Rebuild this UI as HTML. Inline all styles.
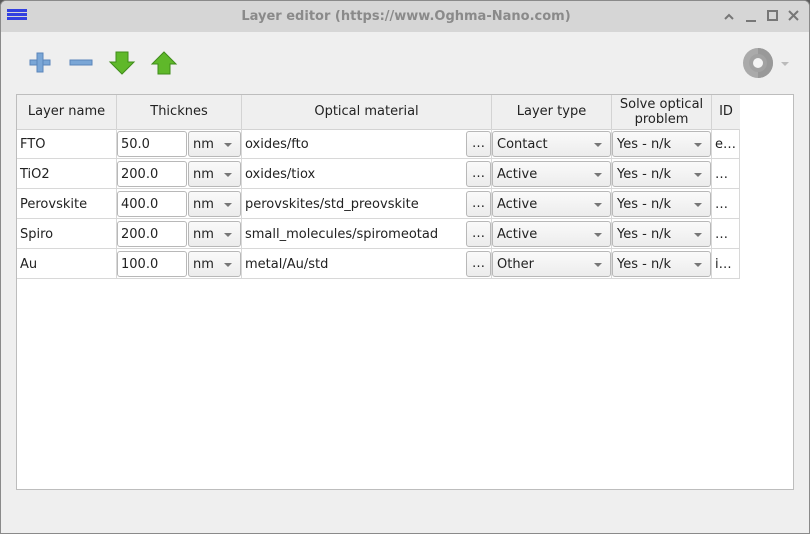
<!DOCTYPE html>
<html><head><meta charset="utf-8"><style>
*{box-sizing:border-box;margin:0;padding:0}
body{width:810px;height:534px;background:#5a5a5a;font-family:"DejaVu Sans","Liberation Sans",sans-serif;font-size:13px;color:#222;position:relative;overflow:hidden}
.win{position:absolute;left:0;top:0;width:810px;height:534px;background:#efefef;border:1px solid #8a8a8a;border-radius:6px 6px 0 0;overflow:hidden}
.title{position:absolute;left:0;top:0;width:810px;height:31px;background:#d6d6d6;}
.title .t{position:absolute;left:0;width:810px;top:8px;text-align:center;color:#8a8a8a;font-weight:bold;font-size:13px}
.a{position:absolute}
.tbl{position:absolute;left:15px;top:93px;width:778px;height:396px;background:#fff;border:1px solid #bdbdbd}
.hd{position:absolute;top:0;height:35px;background:#efefef;border-right:1px solid #d3d3d3;border-bottom:1px solid #d3d3d3;text-align:center;line-height:34px}
.cell{position:absolute;height:30px;border-right:1px solid #d8d8d8;border-bottom:1px solid #d8d8d8;line-height:31px;padding-left:3px;white-space:nowrap}
.inp{position:absolute;height:26px;background:#fff;border:1px solid #b8b8b8;border-radius:3px;line-height:26px;padding-left:3px}
.cb{position:absolute;height:26px;background:linear-gradient(#fafafa,#ececec);border:1px solid #b8b8b8;border-radius:3px;line-height:26px;padding-left:4px}
.cb:after{content:"";position:absolute;right:8px;top:11px;border-left:4px solid transparent;border-right:4px solid transparent;border-top:4px solid #777}
.btn{position:absolute;width:25px;height:26px;background:linear-gradient(#fafafa,#ececec);border:1px solid #b8b8b8;border-radius:3px;text-align:center;line-height:24px}
.r{position:absolute;left:17px;width:723px;height:30px}
</style></head><body><div class="win">
<div class="title"><div class="t">Layer editor (https://www.Oghma-Nano.com)</div>
<div class="a" style="left:6px;top:8px;width:20px;height:3px;background:#3340e0"></div>
<div class="a" style="left:6px;top:12px;width:20px;height:3px;background:#3340e0"></div>
<div class="a" style="left:6px;top:16px;width:20px;height:3px;background:#3340e0"></div>
<svg class="a" style="left:720px;top:7px" width="85" height="16" stroke="#777" stroke-width="2" fill="none"><path d="M4 11 L8 7 L12 11"/><path d="M25 13 H35"/><rect x="47" y="3" width="9" height="9"/><path d="M68 3 L77 12 M77 3 L68 12"/></svg>
</div>
<svg class="a" style="left:28px;top:50px" width="150" height="26">
<rect x="1" y="9" width="20" height="5" fill="#7aa6d6" stroke="#5b86bb"/><rect x="8" y="2" width="6" height="19" fill="#7aa6d6" stroke="#5b86bb"/>
<rect x="41" y="9" width="22" height="5" fill="#7aa6d6" stroke="#5b86bb"/>
<path d="M87 1 H99 V11 H105 L93 23 L81 11 H87 Z" fill="#5fb82a" stroke="#3f8c1a"/>
<path d="M129 23 H141 V13 H147 L135 1 L123 13 H129 Z" fill="#5fb82a" stroke="#3f8c1a"/>
</svg>
<svg class="a" style="left:740px;top:46px" width="50" height="34"><circle cx="17" cy="16" r="15" fill="#aaa"/><path d="M17 1 A15 15 0 0 1 17 31Z" fill="#999"/><circle cx="17" cy="16" r="9" fill="#a2a2a2"/><circle cx="17" cy="16" r="5" fill="#f4f4f4"/><path d="M40 15 L44 19 L48 15Z" fill="#bbb"/></svg>
<div class="tbl">
<div class="hd" style="left:0;width:100px">Layer name</div>
<div class="hd" style="left:100px;width:125px">Thicknes</div>
<div class="hd" style="left:225px;width:250px">Optical material</div>
<div class="hd" style="left:475px;width:120px">Layer type</div>
<div class="hd" style="left:595px;width:100px;line-height:15px;padding-top:2px">Solve optical<br>problem</div>
<div class="hd" style="left:695px;width:28px;border-right:none">ID</div>
</div>
</div>
<div class="r" style="top:129px">
<div class="cell" style="left:0;width:100px">FTO</div><div class="cell" style="left:100px;width:125px"></div><div class="cell" style="left:225px;width:250px">oxides/fto</div><div class="cell" style="left:475px;width:120px"></div><div class="cell" style="left:595px;width:100px"></div><div class="cell" style="left:695px;width:28px">e…</div>
<div class="inp" style="left:100px;top:2px;width:70px">50.0</div><div class="cb" style="left:171px;top:2px;width:53px">nm</div><div class="btn" style="left:449px;top:2px">…</div><div class="cb" style="left:475px;top:2px;width:119px">Contact</div><div class="cb" style="left:595px;top:2px;width:99px">Yes - n/k</div></div>
<div class="r" style="top:159px">
<div class="cell" style="left:0;width:100px">TiO2</div><div class="cell" style="left:100px;width:125px"></div><div class="cell" style="left:225px;width:250px">oxides/tiox</div><div class="cell" style="left:475px;width:120px"></div><div class="cell" style="left:595px;width:100px"></div><div class="cell" style="left:695px;width:28px">…</div>
<div class="inp" style="left:100px;top:2px;width:70px">200.0</div><div class="cb" style="left:171px;top:2px;width:53px">nm</div><div class="btn" style="left:449px;top:2px">…</div><div class="cb" style="left:475px;top:2px;width:119px">Active</div><div class="cb" style="left:595px;top:2px;width:99px">Yes - n/k</div></div>
<div class="r" style="top:189px">
<div class="cell" style="left:0;width:100px">Perovskite</div><div class="cell" style="left:100px;width:125px"></div><div class="cell" style="left:225px;width:250px">perovskites/std_preovskite</div><div class="cell" style="left:475px;width:120px"></div><div class="cell" style="left:595px;width:100px"></div><div class="cell" style="left:695px;width:28px">…</div>
<div class="inp" style="left:100px;top:2px;width:70px">400.0</div><div class="cb" style="left:171px;top:2px;width:53px">nm</div><div class="btn" style="left:449px;top:2px">…</div><div class="cb" style="left:475px;top:2px;width:119px">Active</div><div class="cb" style="left:595px;top:2px;width:99px">Yes - n/k</div></div>
<div class="r" style="top:219px">
<div class="cell" style="left:0;width:100px">Spiro</div><div class="cell" style="left:100px;width:125px"></div><div class="cell" style="left:225px;width:250px">small_molecules/spiromeotad</div><div class="cell" style="left:475px;width:120px"></div><div class="cell" style="left:595px;width:100px"></div><div class="cell" style="left:695px;width:28px">…</div>
<div class="inp" style="left:100px;top:2px;width:70px">200.0</div><div class="cb" style="left:171px;top:2px;width:53px">nm</div><div class="btn" style="left:449px;top:2px">…</div><div class="cb" style="left:475px;top:2px;width:119px">Active</div><div class="cb" style="left:595px;top:2px;width:99px">Yes - n/k</div></div>
<div class="r" style="top:249px">
<div class="cell" style="left:0;width:100px">Au</div><div class="cell" style="left:100px;width:125px"></div><div class="cell" style="left:225px;width:250px">metal/Au/std</div><div class="cell" style="left:475px;width:120px"></div><div class="cell" style="left:595px;width:100px"></div><div class="cell" style="left:695px;width:28px">i…</div>
<div class="inp" style="left:100px;top:2px;width:70px">100.0</div><div class="cb" style="left:171px;top:2px;width:53px">nm</div><div class="btn" style="left:449px;top:2px">…</div><div class="cb" style="left:475px;top:2px;width:119px">Other</div><div class="cb" style="left:595px;top:2px;width:99px">Yes - n/k</div></div>
</body></html>
